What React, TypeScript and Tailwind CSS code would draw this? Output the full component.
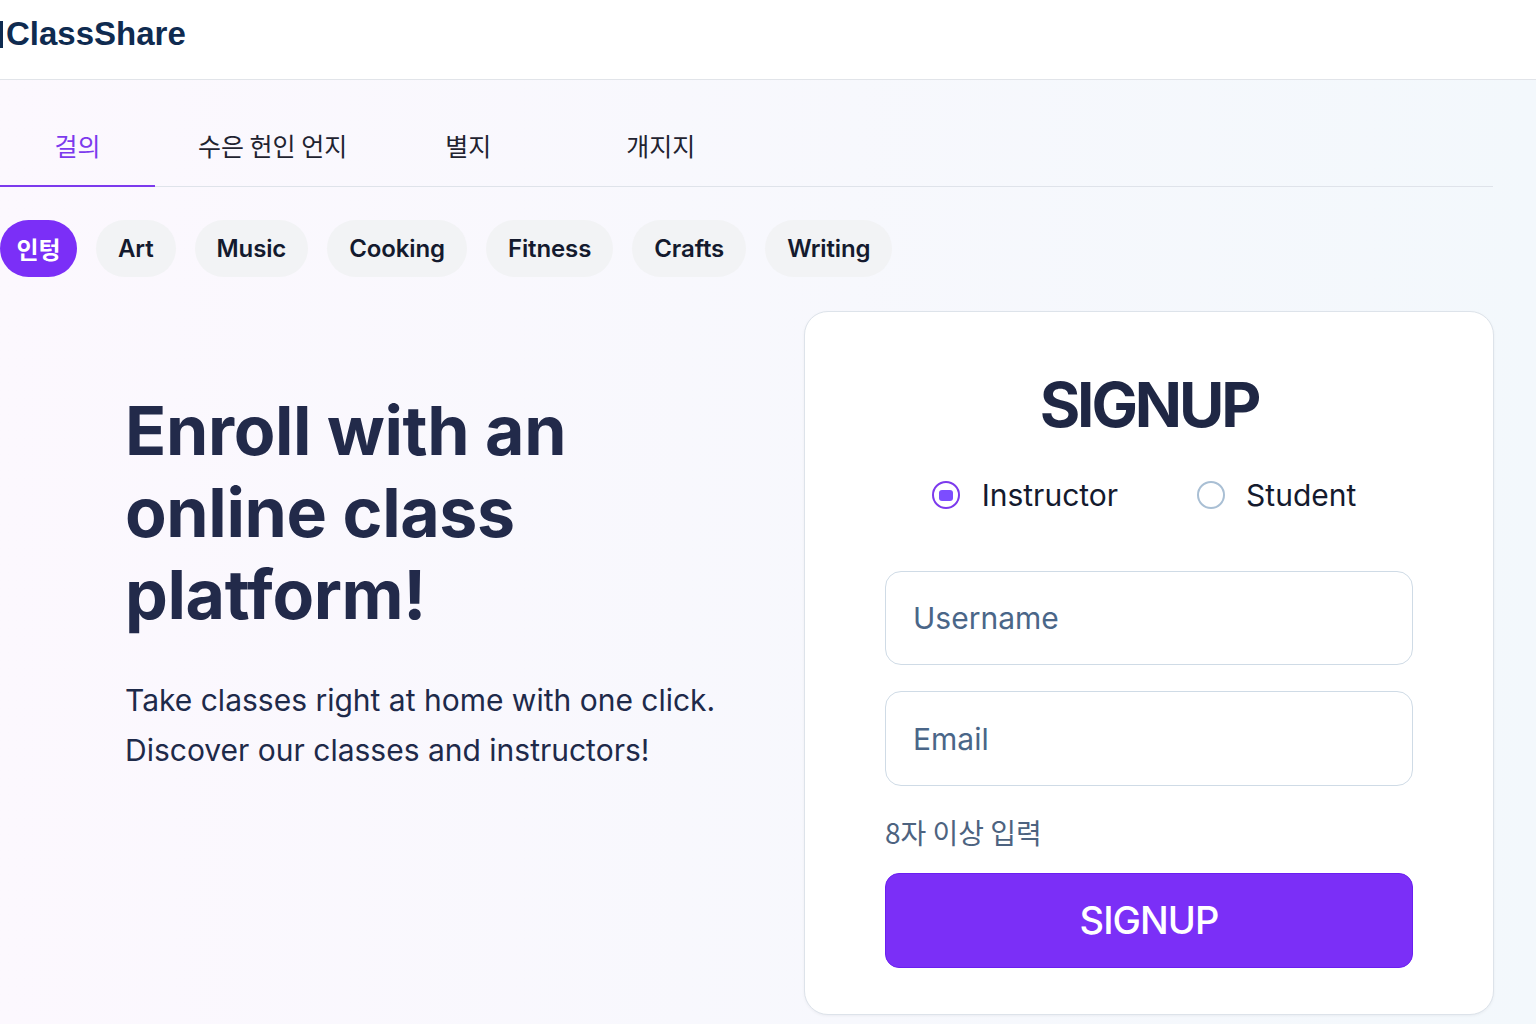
import React, { useState } from 'react';

const tabs = ['걸의', '수은 헌인 언지', '별지', '개지지'];
const categories = ['Art', 'Music', 'Cooking', 'Fitness', 'Crafts', 'Writing'];

// spacing before each tab label, taken from the layout
const tabClasses = ['w-[155px] justify-center', 'ml-[43px]', 'ml-[98px]', 'ml-[135px]'];

export default function App() {
  const [activeTab, setActiveTab] = useState(0);
  const [role, setRole] = useState<'instructor' | 'student'>('instructor');

  return (
    <div className="min-h-screen bg-gradient-to-r from-[#fcf8fe] to-[#f3f8fc] font-['Inter','Noto_Sans_CJK_KR',sans-serif] text-[#222a4a]">
      {/* Header */}
      <header className="h-[80px] bg-white border-b border-[#e1e4e9]">
        <div className="flex items-center pt-[15px] leading-[38px]">
          <span className="w-[3px] h-[27px] bg-[#0f2b50]" />
          <span className="ml-[3px] font-['Liberation_Sans',Arial,sans-serif] font-bold text-[33px] text-[#0f2b50]">
            ClassShare
          </span>
        </div>
      </header>

      {/* Tabs */}
      <nav className="w-[1493px] flex border-b border-[#dfe3ea] font-['Noto_Sans_CJK_KR','Inter',sans-serif]">
        {tabs.map((tab, i) => (
          <button
            key={tab}
            onClick={() => setActiveTab(i)}
            className={`flex pt-[47px] text-[25px] leading-[36px] ${tabClasses[i]} ${
              activeTab === i
                ? 'pb-[22px] text-[#7c3aed] border-b-[2px] border-[#7c3aed] -mb-[1px]'
                : 'pb-[23px] text-[#1f2330]'
            }`}
          >
            {tab}
          </button>
        ))}
      </nav>

      {/* Categories */}
      <div className="flex gap-[19px] mt-[33px]">
        <button className="w-[77px] h-[57px] rounded-full bg-[#7b2ff7] text-white text-[24px] font-bold font-['Noto_Sans_CJK_KR',sans-serif] flex items-center justify-center">
          인텅
        </button>
        {categories.map((c) => (
          <button
            key={c}
            className="h-[57px] px-[22px] rounded-full bg-[#f2f3f5] text-[24px] font-semibold tracking-[-0.005em] text-[#141a2e] flex items-center"
          >
            {c}
          </button>
        ))}
      </div>

      {/* Main */}
      <main className="flex mt-[34px]">
        <section className="w-[804px] pl-[125px] pt-[78px]">
          <h1 className="text-[68px] leading-[82px] font-bold tracking-[-0.005em] text-[#222a4a]">
            Enroll with an
            <br />
            online class
            <br />
            platform!
          </h1>
          <p className="mt-[40px] text-[30px] leading-[50px] text-[#1e2a4a]">
            Take classes right at home with one click.
            <br />
            Discover our classes and instructors!
          </p>
        </section>

        <section className="w-[690px] h-[704px] bg-white border border-[#dde3ea] rounded-[24px] shadow-[0_1px_3px_rgba(15,23,42,0.05)] px-[80px] pt-[62px]">
          <h2 className="text-center text-[62px] leading-[62px] font-bold tracking-[-0.05em] text-[#1f2744]">
            SIGNUP
          </h2>

          <div className="mt-[41px] pr-[10px] flex justify-center gap-[79px] text-[30px] leading-[36px] text-[#141a2e]">
            <label className="flex items-center gap-[22px] cursor-pointer" onClick={() => setRole('instructor')}>
              <span
                className={`w-[28px] h-[28px] rounded-full border-2 flex items-center justify-center ${
                  role === 'instructor' ? 'border-[#7c3aed]' : 'border-[#a9bfd4]'
                }`}
              >
                {role === 'instructor' && <span className="w-[14px] h-[11px] rounded-[3px] bg-[#7c4dff]" />}
              </span>
              Instructor
            </label>
            <label className="flex items-center gap-[21px] cursor-pointer" onClick={() => setRole('student')}>
              <span
                className={`w-[28px] h-[28px] rounded-full border-2 flex items-center justify-center ${
                  role === 'student' ? 'border-[#7c3aed]' : 'border-[#a9bfd4]'
                }`}
              >
                {role === 'student' && <span className="w-[14px] h-[11px] rounded-[3px] bg-[#7c4dff]" />}
              </span>
              Student
            </label>
          </div>

          <input
            placeholder="Username"
            className="mt-[58px] block w-full h-[94px] rounded-[16px] border border-[#cfdbe6] bg-white pl-[27px] text-[30px] text-[#1e2a4a] placeholder:text-[#4a6688] outline-none"
          />
          <input
            placeholder="Email"
            className="mt-[26px] block w-full h-[95px] rounded-[16px] border border-[#cfdbe6] bg-white pl-[27px] text-[30px] text-[#1e2a4a] placeholder:text-[#4a6688] outline-none"
          />

          <p className="mt-[26px] text-[28px] leading-[40px] text-[#4d6380] font-['Noto_Sans_CJK_KR',sans-serif]">
            8자 이상 입력
          </p>

          <button className="mt-[21px] w-full h-[95px] rounded-[14px] bg-[#7b2ff7] border border-[#6a1ff0] text-white text-[38px] font-medium tracking-tight">
            SIGNUP
          </button>
        </section>
      </main>
    </div>
  );
}
